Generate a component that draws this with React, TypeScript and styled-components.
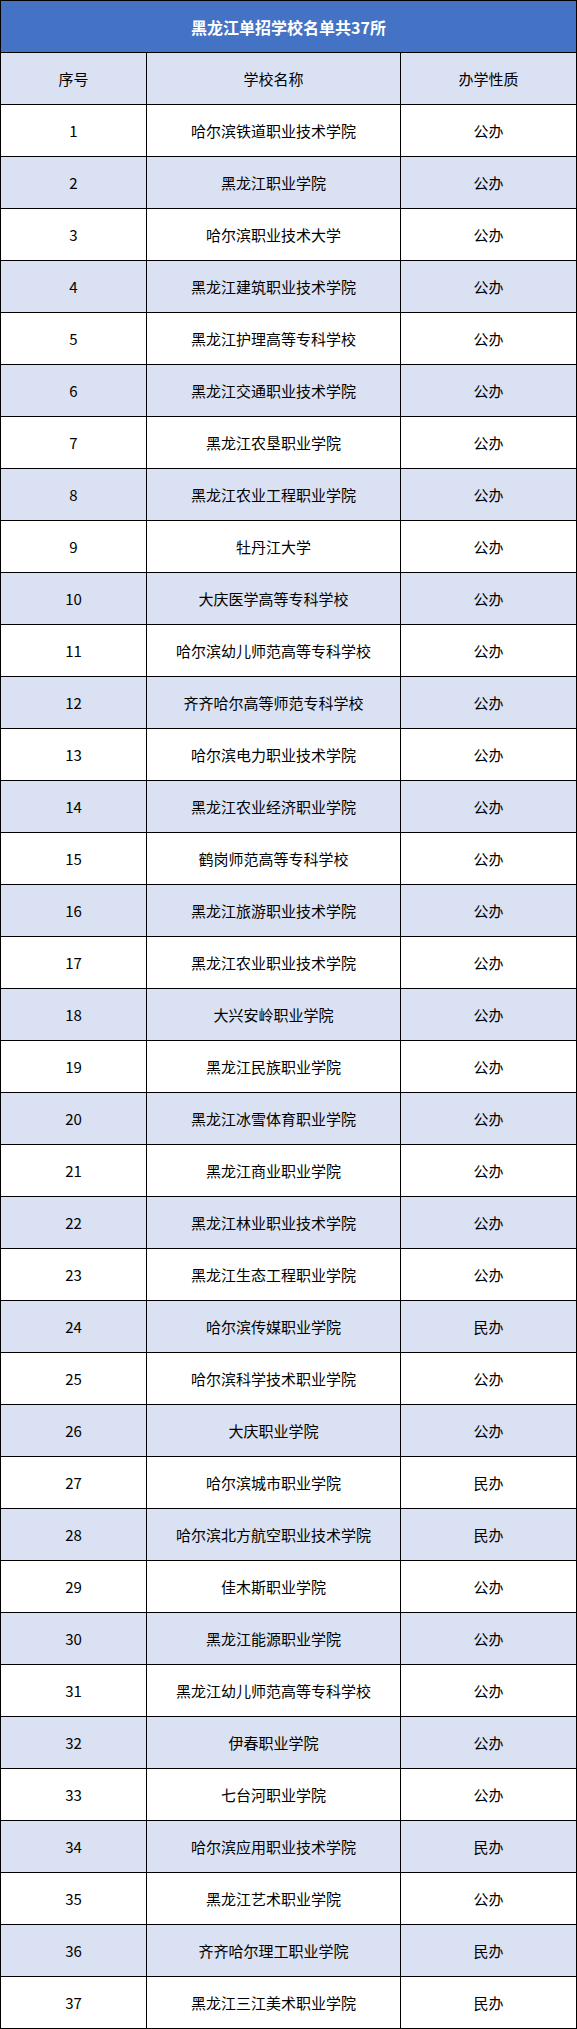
import React from "react";
import styled, { createGlobalStyle } from "styled-components";

const GlobalStyle = createGlobalStyle`
  html, body {
    margin: 0;
    padding: 0;
    background: #ffffff;
  }
  body {
    font-family: "Noto Sans CJK SC", "Liberation Sans", sans-serif;
  }
`;

const Table = styled.div`
  width: 577px;
  box-sizing: border-box;
  display: grid;
  grid-template-columns: 146px 254px 176px;
  border-top: 1px solid #000;
  border-left: 1px solid #000;
`;

const Title = styled.div`
  grid-column: 1 / -1;
  height: 52px;
  box-sizing: border-box;
  border-right: 1px solid #000;
  border-bottom: 1px solid #000;
  background: #4472c4;
  color: #ffffff;
  font-weight: 700;
  font-size: 16px;
  display: flex;
  align-items: center;
  justify-content: center;
`;

const Cell = styled.div<{ $shaded: boolean }>`
  height: 52px;
  box-sizing: border-box;
  border-right: 1px solid #000;
  border-bottom: 1px solid #000;
  background: ${(p) => (p.$shaded ? "#d9e1f2" : "#ffffff")};
  color: #000;
  font-size: 15px;
  display: flex;
  align-items: center;
  justify-content: center;
  white-space: nowrap;
`;

const schools: [string, string][] = [
  ["哈尔滨铁道职业技术学院", "公办"],
  ["黑龙江职业学院", "公办"],
  ["哈尔滨职业技术大学", "公办"],
  ["黑龙江建筑职业技术学院", "公办"],
  ["黑龙江护理高等专科学校", "公办"],
  ["黑龙江交通职业技术学院", "公办"],
  ["黑龙江农垦职业学院", "公办"],
  ["黑龙江农业工程职业学院", "公办"],
  ["牡丹江大学", "公办"],
  ["大庆医学高等专科学校", "公办"],
  ["哈尔滨幼儿师范高等专科学校", "公办"],
  ["齐齐哈尔高等师范专科学校", "公办"],
  ["哈尔滨电力职业技术学院", "公办"],
  ["黑龙江农业经济职业学院", "公办"],
  ["鹤岗师范高等专科学校", "公办"],
  ["黑龙江旅游职业技术学院", "公办"],
  ["黑龙江农业职业技术学院", "公办"],
  ["大兴安岭职业学院", "公办"],
  ["黑龙江民族职业学院", "公办"],
  ["黑龙江冰雪体育职业学院", "公办"],
  ["黑龙江商业职业学院", "公办"],
  ["黑龙江林业职业技术学院", "公办"],
  ["黑龙江生态工程职业学院", "公办"],
  ["哈尔滨传媒职业学院", "民办"],
  ["哈尔滨科学技术职业学院", "公办"],
  ["大庆职业学院", "公办"],
  ["哈尔滨城市职业学院", "民办"],
  ["哈尔滨北方航空职业技术学院", "民办"],
  ["佳木斯职业学院", "公办"],
  ["黑龙江能源职业学院", "公办"],
  ["黑龙江幼儿师范高等专科学校", "公办"],
  ["伊春职业学院", "公办"],
  ["七台河职业学院", "公办"],
  ["哈尔滨应用职业技术学院", "民办"],
  ["黑龙江艺术职业学院", "公办"],
  ["齐齐哈尔理工职业学院", "民办"],
  ["黑龙江三江美术职业学院", "民办"],
];

export default function App() {
  return (
    <>
      <GlobalStyle />
      <Table>
        <Title>黑龙江单招学校名单共37所</Title>
        <Cell $shaded>序号</Cell>
        <Cell $shaded>学校名称</Cell>
        <Cell $shaded>办学性质</Cell>
        {schools.map(([name, kind], i) => {
          const shaded = i % 2 === 1;
          return (
            <React.Fragment key={i}>
              <Cell $shaded={shaded}>{i + 1}</Cell>
              <Cell $shaded={shaded}>{name}</Cell>
              <Cell $shaded={shaded}>{kind}</Cell>
            </React.Fragment>
          );
        })}
      </Table>
    </>
  );
}
